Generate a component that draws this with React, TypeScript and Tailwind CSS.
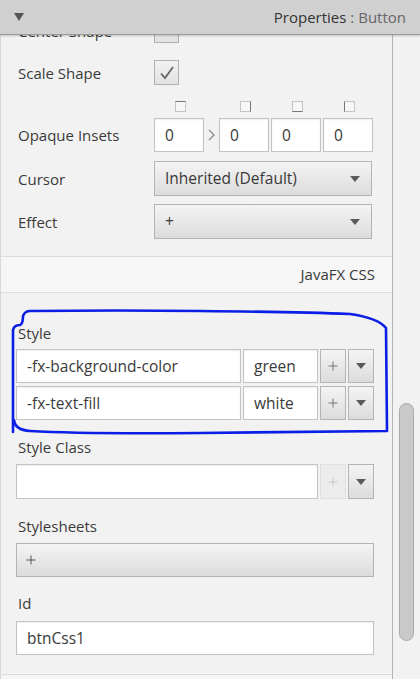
import React from 'react';

const font = { fontFamily: '"Open Sans", "Noto Sans", sans-serif' };

const Arrow = () => (
  <svg width="12" height="8" viewBox="0 0 12 8">
    <path d="M1 1h10L6 7z" fill="#5a5a5a" />
  </svg>
);

const Field: React.FC<{ value?: string; className?: string }> = ({ value = '', className = '' }) => (
  <div className={`h-full bg-white border border-[#c3c3c3] shadow-[inset_0_1px_2px_rgba(0,0,0,0.07)] flex items-center px-[10px] pt-[2px] text-[#3a3a3a] ${className}`}>
    {value}
  </div>
);

const Btn: React.FC<{ children?: React.ReactNode; className?: string; disabled?: boolean }> = ({ children, className = '', disabled }) => (
  <div
    className={`h-full flex items-center border ${
      disabled
        ? 'border-[#e0e0e0] bg-[#ececec] text-[#c8c8c8]'
        : 'border-[#b4b4b4] bg-gradient-to-b from-[#f4f4f4] to-[#dcdcdc] text-[#3a3a3a]'
    } ${className}`}
  >
    {children}
  </div>
);

const Plus: React.FC<{ color?: string }> = ({ color = '#777' }) => (
  <svg width="10" height="10" viewBox="0 0 10 10">
    <path d="M5 0.5v9M0.5 5h9" stroke={color} strokeWidth="1" />
  </svg>
);

const Label: React.FC<{ children: React.ReactNode }> = ({ children }) => (
  <div className="w-[138px] pl-[2px] text-[15px] text-[#3a3a3a] leading-[20px]">{children}</div>
);

const Check: React.FC<{ checked?: boolean }> = ({ checked }) => (
  <div className="w-[25px] h-[25px] border border-[#b0b0b0] bg-gradient-to-b from-[#f2f2f2] to-[#e2e2e2] flex items-center justify-center">
    {checked && (
      <svg width="16" height="14" viewBox="0 0 16 14">
        <path d="M2 7.5l4 4.5 8-11" stroke="#666" strokeWidth="1.8" fill="none" />
      </svg>
    )}
  </div>
);

const SideBox: React.FC<{ side: 'top' | 'right' | 'bottom' | 'left' }> = ({ side }) => {
  const dark = {
    top: 'border-t-[#777]',
    right: 'border-r-[#777]',
    bottom: 'border-b-[#777]',
    left: 'border-l-[#777]',
  }[side];
  return <div className={`w-[11px] h-[11px] border border-[#c4c4c4] bg-[#f7f7f7] ${dark}`} />;
};

export default function App() {
  return (
    <div className="relative w-[420px] h-[679px] overflow-hidden bg-[#f2f2f2] flex flex-col" style={font}>
      {/* header */}
      <div className="relative z-10 h-[35px] shrink-0 bg-[#d0d0d0] border-b border-[#9a9a9a] shadow-[0_1px_2px_rgba(0,0,0,0.2)] flex items-center justify-between pl-[14px] pr-[14px]">
        <svg width="10" height="8" viewBox="0 0 10 8">
          <path d="M0 0h10L5 8z" fill="#555" />
        </svg>
        <div className="text-[15px]">
          <span className="text-[#333]">Properties</span>
          <span className="text-[#666]"> : Button</span>
        </div>
      </div>

      <div className="flex flex-1 min-h-0">
        {/* main panel */}
        <div className="w-[393px] border-r border-[#b4b4b4] border-l border-l-[#d8d8d8] overflow-hidden">
          <div className="mt-[-17px]">
            <div className="flex items-center h-[25px] pl-[15px]">
              <Label>Center Shape</Label>
              <Check />
            </div>
            <div className="flex items-center h-[25px] pl-[15px] mt-[17px]">
              <Label>Scale Shape</Label>
              <Check checked />
            </div>
            <div className="flex items-center h-[11px] mt-[16px] pl-[154px]">
              <div className="w-[50px] flex justify-center"><SideBox side="top" /></div>
              <div className="w-[15px]" />
              <div className="w-[50px] flex justify-center"><SideBox side="right" /></div>
              <div className="w-[2px]" />
              <div className="w-[50px] flex justify-center"><SideBox side="bottom" /></div>
              <div className="w-[2px]" />
              <div className="w-[50px] flex justify-center"><SideBox side="left" /></div>
            </div>
            <div className="flex items-center h-[34px] mt-[6px] pl-[15px]">
              <Label>Opaque Insets</Label>
              <div className="flex items-center h-full text-[15.5px]">
                <Field value="0" className="w-[50px]" />
                <div className="w-[15px] flex justify-center">
                  <svg width="7" height="12" viewBox="0 0 7 12">
                    <path d="M1 1l5 5-5 5" stroke="#8a8a8a" strokeWidth="1.3" fill="none" />
                  </svg>
                </div>
                <Field value="0" className="w-[50px]" />
                <Field value="0" className="w-[50px] ml-[2px]" />
                <Field value="0" className="w-[50px] ml-[2px]" />
              </div>
            </div>
            <div className="flex items-center h-[35px] mt-[9px] pl-[15px]">
              <Label>Cursor</Label>
              <Btn className="w-[218px] justify-between px-[10px] text-[15.5px]">
                <span>Inherited (Default)</span>
                <Arrow />
              </Btn>
            </div>
            <div className="flex items-center h-[35px] mt-[8px] pl-[15px]">
              <Label>Effect</Label>
              <Btn className="w-[218px] justify-between px-[10px] text-[15.5px]">
                <span>+</span>
                <Arrow />
              </Btn>
            </div>

            {/* section header */}
            <div className="mt-[17px] h-[37px] border-t border-b border-[#dcdcdc] bg-[#f6f6f6] flex items-center justify-end pr-[17px] text-[15px] text-[#3a3a3a]">
              JavaFX CSS
            </div>

            <div className="pl-[15px] text-[15.5px]">
              <div className="mt-[30px] h-[20px] flex items-center"><Label>Style</Label></div>
              {[
                ['-fx-background-color', 'green'],
                ['-fx-text-fill', 'white'],
              ].map(([k, v], i) => (
                <div key={k} className={`flex h-[34px] ${i === 0 ? 'mt-[6px]' : 'mt-[3px]'}`}>
                  <Field value={k} className="w-[225px]" />
                  <Field value={v} className="w-[75px] ml-[2px]" />
                  <Btn className="w-[26px] ml-[2px] justify-center"><Plus /></Btn>
                  <Btn className="w-[26px] ml-[2px] justify-center"><Arrow /></Btn>
                </div>
              ))}

              <div className="mt-[17px] h-[20px] flex items-center"><Label>Style Class</Label></div>
              <div className="flex h-[35px] mt-[7px]">
                <Field className="w-[302px]" />
                <Btn disabled className="w-[26px] ml-[2px] justify-center"><Plus color="#c8c8c8" /></Btn>
                <Btn className="w-[26px] ml-[2px] justify-center"><Arrow /></Btn>
              </div>

              <div className="mt-[17px] h-[20px] flex items-center"><Label>Stylesheets</Label></div>
              <div className="mt-[7px] h-[34px] w-[358px]">
                <Btn className="px-[9px]">
                  <Plus color="#555" />
                </Btn>
              </div>

              <div className="mt-[16px] h-[20px] flex items-center"><Label>Id</Label></div>
              <div className="h-[34px] mt-[8px] w-[358px]">
                <Field value="btnCss1" />
              </div>
            </div>

            <div className="mt-[19px] h-[40px] border-t border-[#dcdcdc] bg-[#f6f6f6]" />
          </div>
        </div>

        {/* scrollbar */}
        <div className="flex-1 relative">
          <div className="absolute left-[6px] top-[368px] w-[15px] h-[238px] rounded-full bg-[#c9c9c9] border border-[#a9a9a9]" />
        </div>
      </div>

      {/* hand-drawn annotation */}
      <svg className="absolute left-0 top-0 pointer-events-none" width="420" height="679" viewBox="0 0 420 679">
        <path
          d="M13 432 L13 330 Q14 325 20 325 Q23 324 23 316 Q25 311 30 311 Q120 310 200 311 Q300 312 350 314 Q378 318 386 328 L387 431 Q300 432 200 433 Q80 434 30 431 Q15 430 14 420"
          stroke="#0a1ee6"
          strokeWidth="2.6"
          fill="none"
          strokeLinejoin="round"
          strokeLinecap="round"
        />
      </svg>
    </div>
  );
}
